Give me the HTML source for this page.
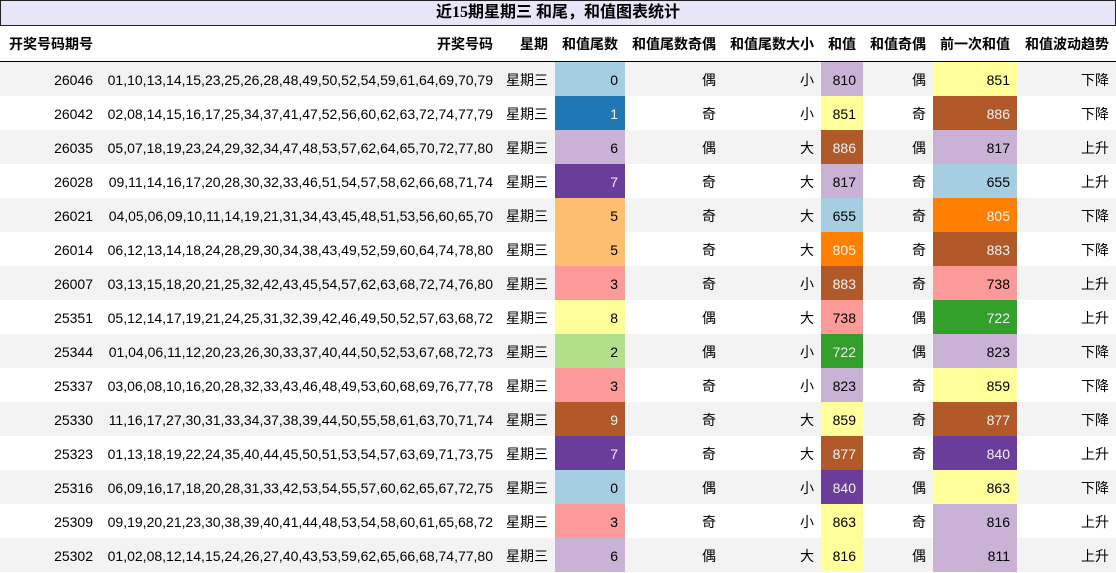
<!DOCTYPE html>
<html><head><meta charset="utf-8"><style>
body{margin:0;width:1116px;height:573px;overflow:hidden;background:#fff;font-family:"Liberation Sans","Noto Sans CJK SC",sans-serif;font-size:14px;color:#000}
.t{position:absolute;left:0;top:0;width:1114px;height:24px;border:1px solid #222;background:#e6e6f8;text-align:center;font:bold 16px/24px "Liberation Serif","Noto Sans CJK SC",sans-serif}
table{position:absolute;left:0;top:26px;border-collapse:collapse;table-layout:fixed;width:1116px}
th,td{padding:0 7px 0 0;text-align:right;white-space:nowrap;overflow:hidden}
th{height:35px;font-weight:bold;border-bottom:1px solid #000}
td{height:34px;padding-top:2px;box-sizing:border-box}
tr.g td{background:#f3f3f3}
.w{color:#f1f1f1}
</style></head><body>
<div class="t">近15期星期三 和尾，和值图表统计</div>
<table>
<colgroup><col style="width:100px"><col style="width:400px"><col style="width:55px"><col style="width:70px"><col style="width:98px"><col style="width:98px"><col style="width:42px"><col style="width:70px"><col style="width:84px"><col style="width:99px"></colgroup>
<tr><th>开奖号码期号</th><th>开奖号码</th><th>星期</th><th>和值尾数</th><th>和值尾数奇偶</th><th>和值尾数大小</th><th>和值</th><th>和值奇偶</th><th>前一次和值</th><th>和值波动趋势</th></tr>
<tr class="g"><td>26046</td><td>01,10,13,14,15,23,25,26,28,48,49,50,52,54,59,61,64,69,70,79</td><td>星期三</td><td style="background:#a6cee3">0</td><td>偶</td><td>小</td><td style="background:#cab2d6">810</td><td>偶</td><td style="background:#ffff99">851</td><td>下降</td></tr>
<tr><td>26042</td><td>02,08,14,15,16,17,25,34,37,41,47,52,56,60,62,63,72,74,77,79</td><td>星期三</td><td class="w" style="background:#1f78b4">1</td><td>奇</td><td>小</td><td style="background:#ffff99">851</td><td>奇</td><td class="w" style="background:#b15928">886</td><td>下降</td></tr>
<tr class="g"><td>26035</td><td>05,07,18,19,23,24,29,32,34,47,48,53,57,62,64,65,70,72,77,80</td><td>星期三</td><td style="background:#cab2d6">6</td><td>偶</td><td>大</td><td class="w" style="background:#b15928">886</td><td>偶</td><td style="background:#cab2d6">817</td><td>上升</td></tr>
<tr><td>26028</td><td>09,11,14,16,17,20,28,30,32,33,46,51,54,57,58,62,66,68,71,74</td><td>星期三</td><td class="w" style="background:#6a3d9a">7</td><td>奇</td><td>大</td><td style="background:#cab2d6">817</td><td>奇</td><td style="background:#a6cee3">655</td><td>上升</td></tr>
<tr class="g"><td>26021</td><td>04,05,06,09,10,11,14,19,21,31,34,43,45,48,51,53,56,60,65,70</td><td>星期三</td><td style="background:#fdbf6f">5</td><td>奇</td><td>大</td><td style="background:#a6cee3">655</td><td>奇</td><td class="w" style="background:#ff7f00">805</td><td>下降</td></tr>
<tr><td>26014</td><td>06,12,13,14,18,24,28,29,30,34,38,43,49,52,59,60,64,74,78,80</td><td>星期三</td><td style="background:#fdbf6f">5</td><td>奇</td><td>大</td><td class="w" style="background:#ff7f00">805</td><td>奇</td><td class="w" style="background:#b15928">883</td><td>下降</td></tr>
<tr class="g"><td>26007</td><td>03,13,15,18,20,21,25,32,42,43,45,54,57,62,63,68,72,74,76,80</td><td>星期三</td><td style="background:#fb9a99">3</td><td>奇</td><td>小</td><td class="w" style="background:#b15928">883</td><td>奇</td><td style="background:#fb9a99">738</td><td>上升</td></tr>
<tr><td>25351</td><td>05,12,14,17,19,21,24,25,31,32,39,42,46,49,50,52,57,63,68,72</td><td>星期三</td><td style="background:#ffff99">8</td><td>偶</td><td>大</td><td style="background:#fb9a99">738</td><td>偶</td><td class="w" style="background:#33a02c">722</td><td>上升</td></tr>
<tr class="g"><td>25344</td><td>01,04,06,11,12,20,23,26,30,33,37,40,44,50,52,53,67,68,72,73</td><td>星期三</td><td style="background:#b2df8a">2</td><td>偶</td><td>小</td><td class="w" style="background:#33a02c">722</td><td>偶</td><td style="background:#cab2d6">823</td><td>下降</td></tr>
<tr><td>25337</td><td>03,06,08,10,16,20,28,32,33,43,46,48,49,53,60,68,69,76,77,78</td><td>星期三</td><td style="background:#fb9a99">3</td><td>奇</td><td>小</td><td style="background:#cab2d6">823</td><td>奇</td><td style="background:#ffff99">859</td><td>下降</td></tr>
<tr class="g"><td>25330</td><td>11,16,17,27,30,31,33,34,37,38,39,44,50,55,58,61,63,70,71,74</td><td>星期三</td><td class="w" style="background:#b15928">9</td><td>奇</td><td>大</td><td style="background:#ffff99">859</td><td>奇</td><td class="w" style="background:#b15928">877</td><td>下降</td></tr>
<tr><td>25323</td><td>01,13,18,19,22,24,35,40,44,45,50,51,53,54,57,63,69,71,73,75</td><td>星期三</td><td class="w" style="background:#6a3d9a">7</td><td>奇</td><td>大</td><td class="w" style="background:#b15928">877</td><td>奇</td><td class="w" style="background:#6a3d9a">840</td><td>上升</td></tr>
<tr class="g"><td>25316</td><td>06,09,16,17,18,20,28,31,33,42,53,54,55,57,60,62,65,67,72,75</td><td>星期三</td><td style="background:#a6cee3">0</td><td>偶</td><td>小</td><td class="w" style="background:#6a3d9a">840</td><td>偶</td><td style="background:#ffff99">863</td><td>下降</td></tr>
<tr><td>25309</td><td>09,19,20,21,23,30,38,39,40,41,44,48,53,54,58,60,61,65,68,72</td><td>星期三</td><td style="background:#fb9a99">3</td><td>奇</td><td>小</td><td style="background:#ffff99">863</td><td>奇</td><td style="background:#cab2d6">816</td><td>上升</td></tr>
<tr class="g"><td>25302</td><td>01,02,08,12,14,15,24,26,27,40,43,53,59,62,65,66,68,74,77,80</td><td>星期三</td><td style="background:#cab2d6">6</td><td>偶</td><td>大</td><td style="background:#ffff99">816</td><td>偶</td><td style="background:#cab2d6">811</td><td>上升</td></tr>
</table>
</body></html>
